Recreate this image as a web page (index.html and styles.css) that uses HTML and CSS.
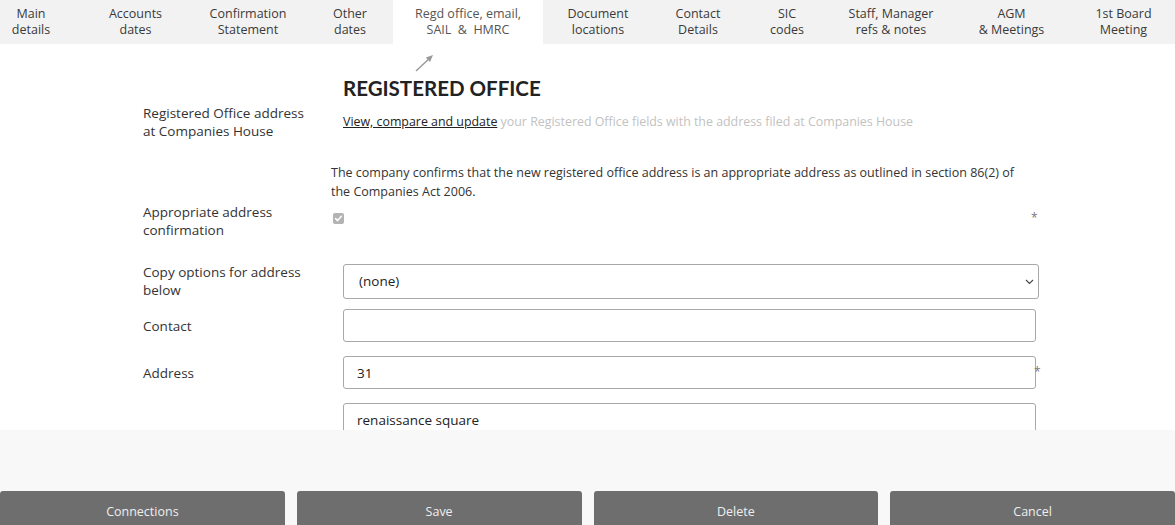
FILE: index.html
```html
<!DOCTYPE html>
<html lang="en">
<head>
<meta charset="utf-8">
<title>Registered Office</title>
<link rel="stylesheet" href="styles.css">
</head>
<body>
<div class="page">
  <div class="content">
    <nav class="tabs">
      <div class="tab w1">Main<br>details</div>
      <div class="tab w2">Accounts<br>dates</div>
      <div class="tab w3">Confirmation<br>Statement</div>
      <div class="tab w4">Other<br>dates</div>
      <div class="tab w5 active">Regd office, email,<br>SAIL &nbsp;&amp;&nbsp; HMRC</div>
      <div class="tab w6">Document<br>locations</div>
      <div class="tab w7">Contact<br>Details</div>
      <div class="tab w8">SIC<br>codes</div>
      <div class="tab w9">Staff, Manager<br>refs &amp; notes</div>
      <div class="tab w10">AGM<br>&amp; Meetings</div>
      <div class="tab w11">1st Board<br>Meeting</div>
    </nav>

    <main class="form">
      <div class="row">
        <div class="label"></div>
        <div class="field">
          <div class="arrow-wrap">
            <svg class="arrow" width="20" height="20" viewBox="0 0 20 20">
              <line x1="2" y1="18" x2="14.6" y2="6.2" stroke="#9a9a9a" stroke-width="1.5"/>
              <polygon points="19,2 11.8,4.6 16,9" fill="#9a9a9a"/>
            </svg>
          </div>
          <h1 class="title">REGISTERED OFFICE</h1>
        </div>
      </div>

      <div class="row r1">
        <div class="label">Registered Office address<br>at Companies House</div>
        <div class="field">
          <p class="link-line"><a href="#">View, compare and update</a> your Registered Office fields with the address filed at Companies House</p>
        </div>
      </div>

      <div class="row r2">
        <div class="label"></div>
        <div class="field">
          <p class="confirm-text">The company confirms that the new registered office address is an appropriate address as outlined in section 86(2) of the Companies Act 2006.</p>
        </div>
      </div>

      <div class="row r3">
        <div class="label">Appropriate address<br>confirmation</div>
        <div class="field inline">
          <div class="check-slot">
            <svg width="11" height="11" viewBox="0 0 11 11">
              <rect x="0" y="0" width="11" height="11" rx="2" fill="#b3b3b3"/>
              <path d="M2.6 5.6 L4.6 7.6 L8.4 3.3" fill="none" stroke="#fff" stroke-width="1.5" stroke-linecap="round" stroke-linejoin="round"/>
            </svg>
          </div>
          <span class="req req-check">*</span>
        </div>
      </div>

      <div class="row r4">
        <div class="label">Copy options for address<br>below</div>
        <div class="field">
          <div class="select-wrap">
            <select class="select">
              <option>(none)</option>
            </select>
            <svg class="chevron" width="9" height="6" viewBox="0 0 9 6">
              <path d="M1 1 L4.5 4.5 L8 1" fill="none" stroke="#444" stroke-width="1.1"/>
            </svg>
          </div>
        </div>
      </div>

      <div class="row r5">
        <div class="label">Contact</div>
        <div class="field">
          <input class="text-input" type="text" value="">
        </div>
      </div>

      <div class="row r6">
        <div class="label">Address</div>
        <div class="field inline">
          <input class="text-input" type="text" value="31">
          <span class="req req-input">*</span>
        </div>
      </div>

      <div class="row r7">
        <div class="label"></div>
        <div class="field">
          <input class="text-input" type="text" value="renaissance square">
        </div>
      </div>
    </main>
  </div>

  <footer class="actions">
    <button class="btn">Connections</button>
    <button class="btn">Save</button>
    <button class="btn">Delete</button>
    <button class="btn">Cancel</button>
  </footer>
</div>
</body>
</html>
```

FILE: styles.css
```css
* {
  box-sizing: border-box;
}

html,
body {
  margin: 0;
  padding: 0;
}

body {
  width: 1175px;
  height: 525px;
  overflow: hidden;
  background: #ffffff;
  font-family: "Open Sans", "Noto Sans", sans-serif;
  color: #333333;
}

.page {
  display: flex;
  flex-direction: column;
  height: 525px;
}

.content {
  flex: none;
  height: 430px;
  overflow: hidden;
  background: #ffffff;
}

/* Tabs */
.tabs {
  display: flex;
  height: 44px;
  background: #f2f2f2;
}

.tab {
  flex: none;
  text-align: center;
  font-size: 12.5px;
  line-height: 16px;
  padding-top: 6px;
  color: #3a3a3a;
  white-space: nowrap;
}

.tab.active {
  background: #ffffff;
  color: #555555;
}

.w1 { width: 62px; }
.w2 { width: 127px; padding-left: 20px; }
.w3 { width: 118px; }
.w4 { width: 86px; }
.w5 { width: 150px; }
.w6 { width: 110px; }
.w7 { width: 90px; }
.w8 { width: 88px; }
.w9 { width: 120px; }
.w10 { width: 121px; }
.w11 { width: 103px; }

/* Form */
.form {
  display: flex;
  flex-direction: column;
  padding-left: 143px;
}

.row {
  display: grid;
  grid-template-columns: 188px 740px;
  align-items: center;
}

.label {
  font-size: 13.5px;
  line-height: 18px;
  color: #333333;
}

.field.inline {
  display: flex;
  align-items: flex-start;
}

.arrow-wrap {
  height: 32px;
  padding-top: 9px;
  padding-left: 83px;
}

.arrow {
  display: block;
}

.title {
  margin: 0;
  padding-left: 12px;
  font-family: Lato, "Open Sans", sans-serif;
  font-weight: 700;
  font-size: 20.5px;
  line-height: 24px;
  color: #222222;
}

.r1 {
  margin-top: 4px;
  height: 36px;
}

.link-line {
  margin: 0;
  padding-left: 12px;
  font-size: 12.4px;
  line-height: 18px;
  color: #c2c2c2;
  white-space: nowrap;
}

.link-line a {
  color: #222222;
  text-decoration: underline;
}

.r2 {
  margin-top: 23px;
}

.confirm-text {
  margin: 0;
  width: 695px;
  font-size: 12.5px;
  line-height: 19px;
  color: #333333;
}

.r3 {
  margin-top: 2px;
  align-items: start;
}

.check-slot {
  width: 702px;
  padding-left: 2px;
  padding-top: 10px;
}

.check-slot svg {
  display: block;
}

.req {
  margin-left: -2px;
  font-size: 12px;
  line-height: 14px;
  color: #777777;
}

.req-check {
  margin-top: 8px;
}

.req-input {
  margin-top: 9px;
}

.r4 {
  margin-top: 24px;
}

.select-wrap {
  position: relative;
  margin-left: 12px;
  width: 696px;
  height: 35px;
}

.select {
  appearance: none;
  -webkit-appearance: none;
  display: block;
  width: 100%;
  height: 100%;
  margin: 0;
  border: 1px solid #a8a8a8;
  border-radius: 3px;
  background: #ffffff;
  padding: 0 0 0 15px;
  font-family: "Open Sans", sans-serif;
  font-size: 13.5px;
  color: #222222;
}

.chevron {
  position: absolute;
  right: 5px;
  top: 15px;
}

.r5 {
  margin-top: 10px;
}

.r6,
.r7 {
  margin-top: 14px;
}

.text-input {
  display: block;
  margin: 0 0 0 12px;
  width: 693px;
  height: 33px;
  border: 1px solid #a8a8a8;
  border-radius: 3px;
  background: #ffffff;
  padding: 0 0 0 13px;
  font-family: "Open Sans", sans-serif;
  font-size: 13.5px;
  color: #222222;
  outline: none;
}

/* Footer actions */
.actions {
  flex: none;
  height: 95px;
  overflow: hidden;
  background: #f8f8f8;
  display: grid;
  grid-template-columns: repeat(4, 1fr);
  column-gap: 12px;
  align-items: start;
  padding-top: 61px;
}

.btn {
  height: 40px;
  margin: 0;
  border: none;
  border-radius: 3px 3px 0 0;
  background: #6e6e6e;
  color: #eeeeee;
  font-family: "Open Sans", sans-serif;
  font-size: 12.5px;
  padding: 0;
}
```
